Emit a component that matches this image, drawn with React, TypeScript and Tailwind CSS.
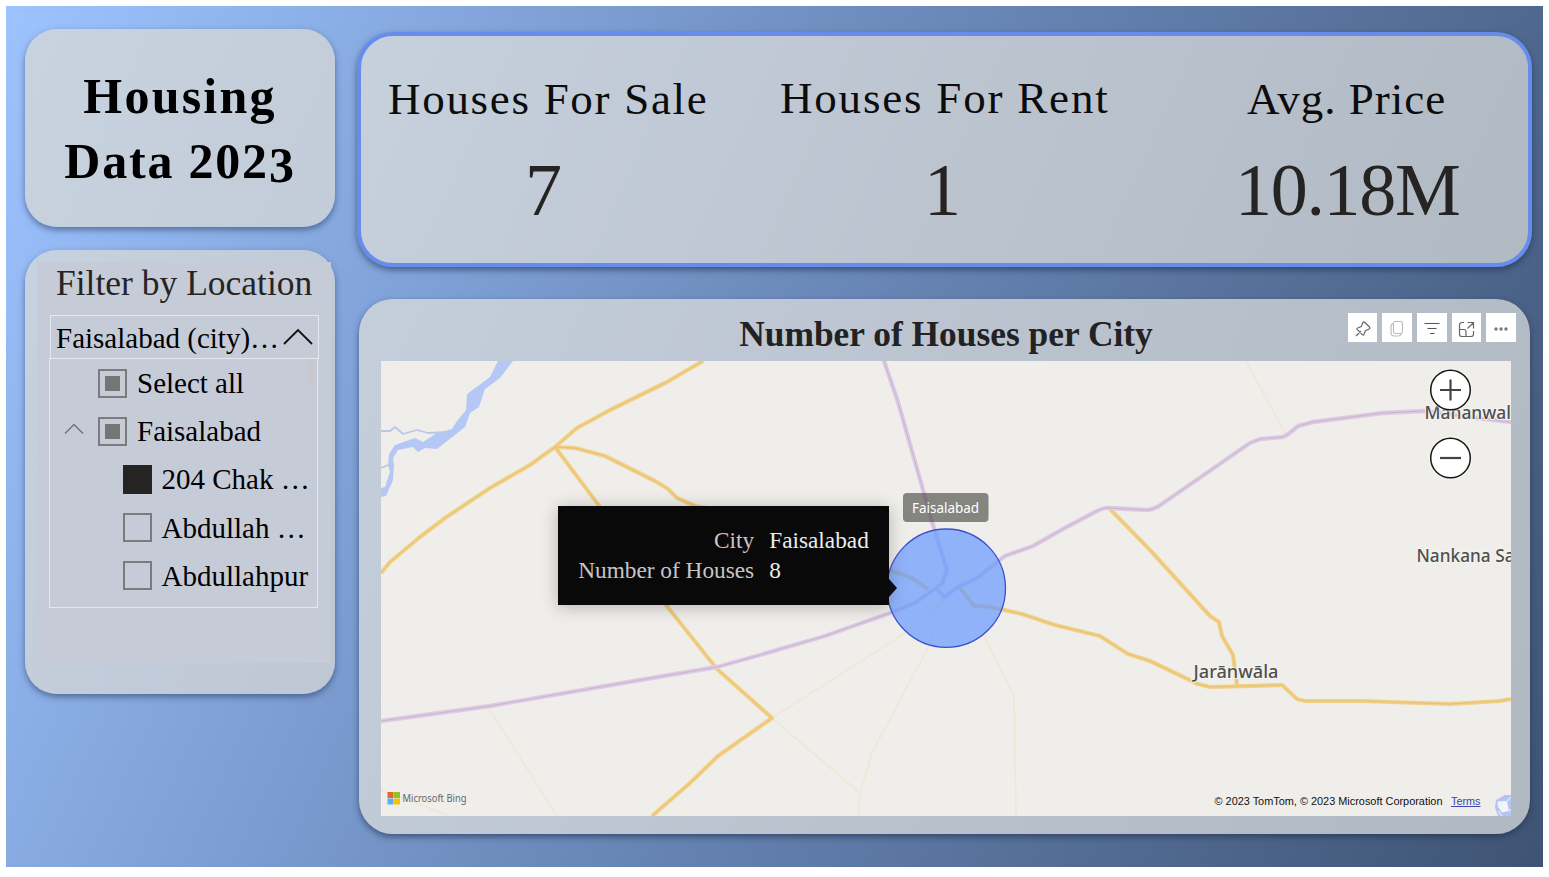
import React from 'react';

const SERIF = "font-['Liberation_Serif',serif]";

type BoxState = 'partial' | 'checked' | 'empty';

function CheckBox({ state }: { state: BoxState }) {
  if (state === 'checked') return <span className="h-[29px] w-[29px] shrink-0 bg-[#252423]" />;
  return (
    <span className="flex h-[29px] w-[29px] shrink-0 items-center justify-center border-2 border-[#7c7a7c]">
      {state === 'partial' && <span className="h-[15px] w-[15px] bg-[#757575]" />}
    </span>
  );
}

const rows: { label: string; state: BoxState; child: boolean; open?: boolean }[] = [
  { label: 'Select all', state: 'partial', child: false },
  { label: 'Faisalabad', state: 'partial', child: false, open: true },
  { label: '204 Chak …', state: 'checked', child: true },
  { label: 'Abdullah …', state: 'empty', child: true },
  { label: 'Abdullahpur', state: 'empty', child: true },
];

function FilterCard() {
  return (
    <section className="mt-[23px] h-[444px] w-[310px] rounded-[32px] bg-linear-114 from-[#c6d2df] to-[#bfc6d4] pt-[12px] pl-[12px] shadow-[0_3px_6px_rgba(35,55,95,0.55)]">
      <div className="h-[401px] w-[294px] bg-[#c6cbd8] pl-[12px]">
        <h2 className="h-[53px] pl-[7px] text-[35.5px] leading-[42px] whitespace-nowrap text-[#252423]">Filter by Location</h2>
        <div className="ml-[1px] flex h-[44px] w-[269px] items-center justify-between border border-[#e6e8ee] pr-[5px] pl-[5px]">
          <span className="pt-[2px] text-[29px] leading-[44px] whitespace-nowrap text-black">Faisalabad (city)…</span>
          <svg className="h-[20px] w-[30px] shrink-0" viewBox="0 0 30 20" fill="none" stroke="#111" strokeWidth="1.8">
            <path d="M1 17 15 3 29 17" />
          </svg>
        </div>
        <div className="relative -mt-px h-[250px] w-[269px] border border-[#e6e8ee]">
          <span className="absolute top-0 right-0 h-[25px] w-[9px] bg-[#c8c8d1]" />
          {rows.map((r) => (
            <div key={r.label} className="flex h-[48.2px] items-center">
              <span className={r.child ? 'w-[72.500px] shrink-0' : 'flex w-[48px] shrink-0 pl-[14px]'}>
                {r.open && (
                  <svg className="-mt-[4px] h-[12px] w-[20px]" viewBox="0 0 20 12" fill="none" stroke="#757575" strokeWidth="1.5">
                    <path d="M1 10.500 10 1.500 19 10.500" />
                  </svg>
                )}
              </span>
              <CheckBox state={r.state} />
              <span className="pl-[10px] text-[29px] leading-[48px] whitespace-nowrap text-black">{r.label}</span>
            </div>
          ))}
        </div>
      </div>
    </section>
  );
}

function Kpi({ title, value, titleClass, valueClass }: { title: string; value: string; titleClass: string; valueClass: string }) {
  return (
    <div className="flex flex-col">
      <h3 className={`text-[45px] leading-[50px] whitespace-nowrap text-[#0c0c0d] ${titleClass}`}>{title}</h3>
      <p className={`pt-[24px] text-[74px] leading-[84px] whitespace-nowrap text-[#252423] ${valueClass}`}>{value}</p>
    </div>
  );
}

const yellow = [
  'M381 573 390 562 420 537 445 518 490 488 530 465 555 447 577 428 610 410 667 382 703 361',
  'M555 447 575 448 605 456 655 481 668 489 677 498 695 506 750 515 840 550 889 570 912 578 928 589',
  'M555 447 600 507 666 605 717 669 772 718 718 756 690 783 652 816',
  'M959 587 974 606 982 606 1000 609 1022 614 1055 625 1100 636 1128 654 1150 661 1198 684 1210 687 1282 685 1297 699 1305 701 1363 701 1450 704 1500 701 1511 699',
  'M1110 509 1150 550 1210 616 1219 622 1222 636 1233 655 1237 685',
];
const purple = [
  'M381 721 490 706 640 680 717 667 760 655 825 636 890 613 915 603 930 592 936 588',
  'M884 361 898 402 933 525 947 570 942 584 936 588 944 597 958 587 977 578 1005 556 1033 546 1063 529 1095 512Q1104 507 1110 508L1148 510Q1154 509 1159 506L1250 443 1260 439 1283 437Q1288 435 1298 426L1313 422 1383 413 1423 411 1477 418 1511 422',
];
const faint = [
  'M490 710 557 816',
  'M381 790 450 816',
  'M944 600 915 627 772 718 860 793 858 816',
  'M944 600Q934 605 932 640L900 700 872 753 860 793',
  'M944 600Q975 610 988 645L1014 695 1016 816',
  'M1246 361 1285 433',
];

function MapCanvas() {
  return (
    <svg className="block h-[455px] w-[1130px]" viewBox="381 361 1130 455" fill="none" strokeLinejoin="round">
      <rect x="381" y="361" width="1130" height="455" fill="#efeeea" />
      <g stroke="#ece9d8" strokeWidth="1.8">
        {faint.map((d) => <path key={d} d={d} />)}
      </g>
      <path
        fill="#b5c8f5"
        d="M498 361 490 377 467 394 466 410 457 421 452 429 437 433 423 442 415 438 395 445 389 454 388 465 390 472 385 487 381 488V497L386 496 393 480 394 465 393 458 398 450 413 447 418 452 425 448 437 449 465 427 470 413 479 407 485 389 500 378 513 361Z"
      />
      <path stroke="#bac7ea" strokeWidth="1.8" d="M381 431 390 431 395 427 403 434 417 430 428 433 448 432M381 468 388 465" />
      <g stroke="#f2d086" strokeWidth="4.200">
        {yellow.map((d) => <path key={d} d={d} />)}
      </g>
      <g stroke="#e2c372" strokeWidth="1">
        {yellow.map((d) => <path key={d} d={d} />)}
      </g>
      <g stroke="#dccbe2" strokeWidth="4.4">
        {purple.map((d) => <path key={d} d={d} />)}
      </g>
      <g stroke="#c9b3d3" strokeWidth="1">
        {purple.map((d) => <path key={d} d={d} />)}
      </g>
      <g fill="#505050" stroke="#f5f4f1" strokeWidth="2" paintOrder="stroke" fontFamily="'Noto Sans', sans-serif" fontSize="18" fontWeight="500">
        <text x="1193.500" y="678" textLength="85" lengthAdjust="spacingAndGlyphs">Jarānwāla</text>
        <text x="1416.500" y="562" textLength="98" lengthAdjust="spacingAndGlyphs">Nankana Sa</text>
        <text x="1424.500" y="419" textLength="86.500" lengthAdjust="spacingAndGlyphs">Mananwal</text>
      </g>
      <circle cx="946.300" cy="588.200" r="59.200" fill="#6699ff" fillOpacity=".7" stroke="#3a50d0" strokeWidth="1.300" />
      <rect x="903" y="493" width="85.500" height="29" rx="4" fill="#50504c" fillOpacity=".67" />
      <text x="912" y="513" fill="#fff" fontFamily="'Noto Sans', sans-serif" fontSize="15" textLength="67" lengthAdjust="spacingAndGlyphs">Faisalabad</text>
      {[390, 458].map((cy) => (
        <g key={cy}>
          <circle cx="1450.500" cy={cy} r="22" fill="#f6f5f2" fillOpacity=".5" />
          <circle cx="1450.500" cy={cy} r="19.800" fill="#fff" stroke="#161616" strokeWidth="1.500" />
          <path stroke="#444" strokeWidth="2.200" d={cy === 390 ? 'M1440 390H1461M1450.500 379.500V400.500' : 'M1440 458H1461'} />
        </g>
      ))}
      <rect x="387.500" y="792" width="6" height="6" fill="#e8652b" />
      <rect x="394" y="792" width="6" height="6" fill="#8fc32e" />
      <rect x="387.500" y="798.500" width="6" height="6" fill="#58aef3" />
      <rect x="394" y="798.500" width="6" height="6" fill="#f5c20b" />
      <text x="402.500" y="802" fill="#666" fontFamily="'Noto Sans', sans-serif" fontSize="11.500" textLength="64" lengthAdjust="spacingAndGlyphs">Microsoft Bing</text>
      <g fontFamily="'Liberation Sans', sans-serif" fontSize="11">
        <text x="1214.500" y="805" fill="#111" textLength="228" lengthAdjust="spacingAndGlyphs">© 2023 TomTom, © 2023 Microsoft Corporation</text>
        <text x="1451" y="805" fill="#3b45ad" textLength="29.500" lengthAdjust="spacingAndGlyphs">Terms</text>
      </g>
      <path stroke="#3b45ad" d="M1451 806.500H1480.500" />
      <path fill="#b4c3f3" d="M1496 800 1505 795 1511 795V816H1498L1495 808Z" />
      <path fill="#f3f4f5" d="M1497.500 801.500 1507 801 1509 811 1502 812.500 1498 807Z" />
      <path stroke="#dce3f8" strokeWidth="1.500" d="M1507 801 1511 797M1509 811 1511 809M1498 811 1502 816" />
    </svg>
  );
}

const toolbarIcons: { id: string; color: string; art: React.ReactNode }[] = [
  {
    id: 'pin',
    color: '#666',
    art: <path d="M8 23 13 18M16.500 9.200 21.300 13.800Q22.800 15.300 20.700 16.200L17.500 17.600 16 21.500Q15.400 22.700 14.400 21.700L9.300 16.600Q8.300 15.500 9.700 15L13.300 13.600 14.600 10Q15.400 8.200 16.500 9.200Z" />,
  },
  {
    id: 'copy',
    color: '#bdbdbd',
    art: (
      <>
        <rect x="11.500" y="8.500" width="9" height="12" rx="1.800" />
        <path d="M11.500 10.500Q9 11 9 13V19.500Q9 23 12.500 23H16.500Q18.500 23 19 21" />
      </>
    ),
  },
  { id: 'filter', color: '#555', art: <path d="M7.500 10.500H22.500M10.500 15.500H19.500M13 20.500H17.500" /> },
  {
    id: 'focus',
    color: '#666',
    art: <path d="M12 9.500H10Q7.500 9.500 7.500 12V21Q7.500 23.500 10 23.500H19Q21.500 23.500 21.500 21V18M7.500 16.500H12Q14 16.500 14 18.500V23.500M15.500 9.500H21.500V15.500M21.500 9.500 15.500 15.500" />,
  },
  {
    id: 'more',
    color: '#777',
    art: (
      <g fill="currentColor" stroke="none">
        <circle cx="10" cy="16" r="1.700" />
        <circle cx="15" cy="16" r="1.700" />
        <circle cx="20" cy="16" r="1.700" />
      </g>
    ),
  },
];

function MapCard() {
  return (
    <section className="relative mt-[31.500px] ml-[2px] h-[535px] w-[1171px] rounded-[34px] bg-linear-114 from-[#c4cfdb] via-[#bac2ce] to-[#b0b8c1] shadow-[0_3px_6px_rgba(30,45,75,0.6)]">
      <div className="flex h-[62.500px] justify-center">
        <h2 className="pt-[15px] pl-[3px] text-[35.400px] leading-[40px] font-bold whitespace-nowrap text-[#222]">Number of Houses per City</h2>
      </div>
      <div className="absolute top-[14.500px] right-[14px] flex gap-[5px]">
        {toolbarIcons.map((t) => (
          <button key={t.id} aria-label={t.id} className="h-[29px] w-[29.700px] bg-white">
            <svg className="h-[29px] w-[29px]" viewBox="0 0 29 29" fill="none" stroke="currentColor" strokeWidth="1.200" color={t.color}>
              {t.art}
            </svg>
          </button>
        ))}
      </div>
      <div className="relative ml-[22px] h-[455px] w-[1130px]">
        <MapCanvas />
        <div className="absolute top-[145px] left-[177px] grid h-[99px] w-[331px] grid-cols-[auto_auto] content-center justify-center gap-x-[15px] bg-[#090909] pb-px text-[23.300px] leading-[30px] whitespace-nowrap shadow-[0_2px_16px_rgba(0,0,0,0.25)]">
          <span className="text-right text-[#c6c6c6]">City</span>
          <span className="text-[#ededed]">Faisalabad</span>
          <span className="text-right text-[#c6c6c6]">Number of Houses</span>
          <span className="text-[#ededed]">8</span>
          <svg className="absolute top-[73px] left-[331px] h-[18px] w-[8px]" viewBox="0 0 8 18">
            <path fill="#0a0d14" d="M0 0 8 9 0 18Z" />
          </svg>
        </div>
      </div>
    </section>
  );
}

export default function App() {
  return (
    <main className={`h-[877px] w-[1549px] overflow-hidden bg-white pt-[6px] pl-[6px] ${SERIF}`}>
      <div className="flex h-[860.500px] w-[1537px] gap-[22px] bg-linear-114 from-[#9dc3ff] from-0% via-[#6785b5] via-52% to-[#3f5474] to-100% pl-[19px]">
        <div className="w-[310px] shrink-0 pt-[23px]">
          <section className="h-[198px] rounded-[32px] bg-linear-114 from-[#c7d3df] to-[#c3ccd9] pt-[35px] text-center text-[50px] leading-[64.500px] font-bold text-black shadow-[0_3px_6px_rgba(35,55,95,0.55)]">
            <h1 className="whitespace-nowrap">
              <span className="block tracking-[2.200px]">Housing</span>
              <span className="block tracking-[1.800px]">
                Data 202<span className="relative top-[4px]">3</span>
              </span>
            </h1>
          </section>
          <FilterCard />
        </div>
        <div className="w-[1175px] shrink-0 pt-[26px]">
          <section className="grid h-[235px] w-[1175px] grid-cols-[392px_459px_auto] rounded-[36px] border-[4px] border-[#668cec] bg-linear-114 from-[#c6d1dd] via-[#bcc4d0] to-[#b1bac3] pt-[38px] pl-[27px] shadow-[0_3px_6px_rgba(30,45,75,0.6)]">
            <Kpi title="Houses For Sale" value="7" titleClass="tracking-[1.700px]" valueClass="pl-[137px]" />
            <Kpi title="Houses For Rent" value="1" titleClass="tracking-[1.800px] -mt-px mb-px" valueClass="pl-[144px]" />
            <Kpi title="Avg. Price" value="10.18M" titleClass="tracking-[1.000px] pl-[8px]" valueClass="-ml-[4px] tracking-[-1.300px]" />
          </section>
          <MapCard />
        </div>
      </div>
    </main>
  );
}
